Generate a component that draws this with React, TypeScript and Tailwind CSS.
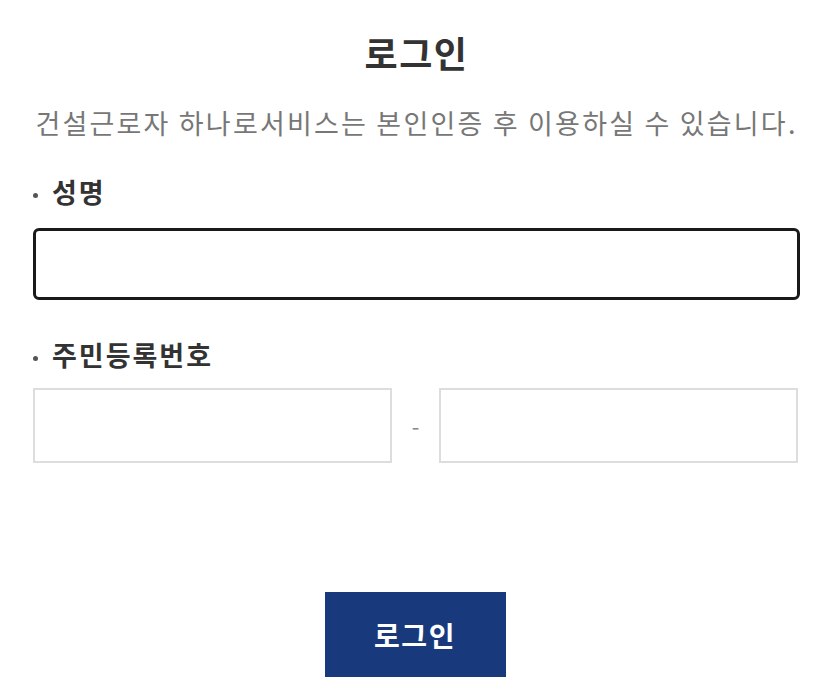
import React from "react";

const font = { fontFamily: '"Noto Sans CJK KR", "Noto Sans", sans-serif' };

function Label({ children }: { children: React.ReactNode }) {
  return (
    <div className="flex items-center h-[32px] text-[27px] leading-[32px] font-bold text-[#333] tracking-[2px]">
      <span className="inline-block w-[5px] h-[5px] rounded-full bg-[#555] mr-[14px] mt-[6px]" />
      <span>{children}</span>
    </div>
  );
}

export default function App() {
  return (
    <div className="w-[828px] h-[696px] bg-white overflow-hidden" style={font}>
      <div className="flex flex-col pl-[33px] pr-[28px] pt-[32px]">
        <h1 className="text-center text-[36px] leading-[40px] font-bold text-[#333] tracking-[1.5px]">로그인</h1>
        <p className="mt-[33px] text-center text-[27px] leading-[36px] text-[#777] tracking-[2.2px] whitespace-nowrap">
          건설근로자 하나로서비스는 본인인증 후 이용하실 수 있습니다.
        </p>
        <div className="mt-[35px]">
          <Label>성명</Label>
        </div>
        <input
          type="text"
          className="mt-[20px] h-[72px] w-full border-[3px] border-[#1a1a1a] rounded-[6px] outline-none px-3 text-[22px]"
        />
        <div className="mt-[39px]">
          <Label>주민등록번호</Label>
        </div>
        <div className="mt-[17px] flex items-center h-[75px] pr-[2px]">
          <input
            type="text"
            className="h-full flex-1 min-w-0 border-2 border-[#dddddd] outline-none px-3 text-[22px]"
          />
          <span className="w-[47px] text-center text-[22px] text-[#888]">-</span>
          <input
            type="password"
            className="h-full flex-1 min-w-0 border-2 border-[#dddddd] outline-none px-3 text-[22px]"
          />
        </div>
        <div className="mt-[129px] flex justify-center pr-[3px]">
          <button className="w-[181px] h-[85px] bg-[#183a7c] text-white text-[28px] font-bold tracking-[1.5px]">
            로그인
          </button>
        </div>
      </div>
    </div>
  );
}
